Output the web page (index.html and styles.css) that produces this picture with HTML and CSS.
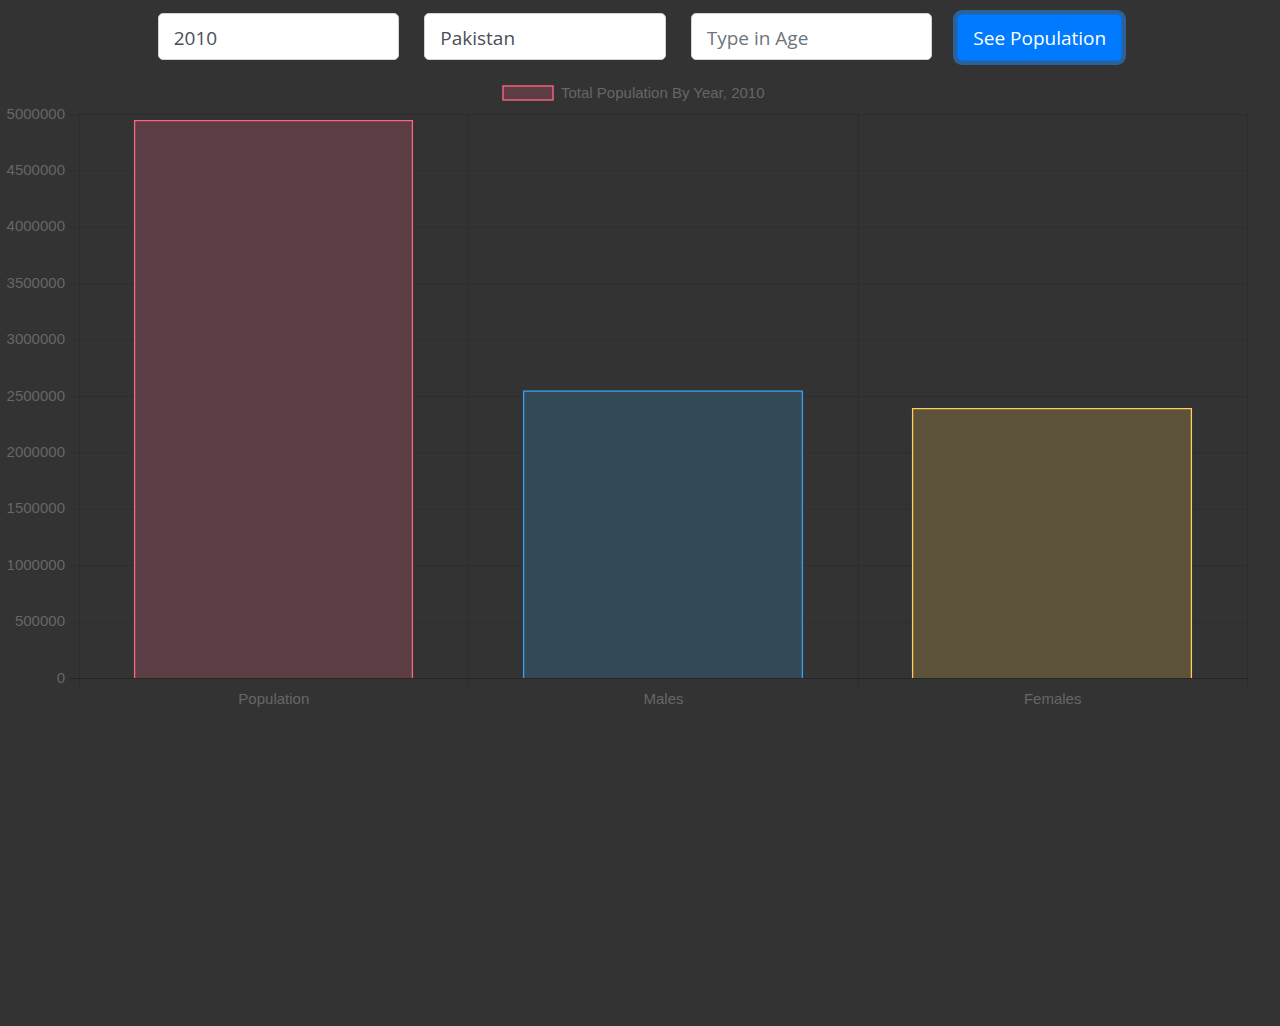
FILE: index.html
```html
<!DOCTYPE html>
<html lang="en">
<head>
<meta charset="utf-8">
<title>Population</title>
<link rel="stylesheet" href="styles.css">
</head>
<body>
<form class="controls">
  <input class="field" type="text" value="2010">
  <input class="field" type="text" value="Pakistan">
  <input class="field" type="text" placeholder="Type in Age">
  <button class="btn" type="button">See Population</button>
</form>
<div class="chart">
  <svg class="chart-svg" width="1280" height="650" viewBox="0 72 1280 650" xmlns="http://www.w3.org/2000/svg">
    <!-- legend -->
    <rect x="503" y="86" width="50" height="14" fill="#5c3d43" stroke="#ff6384" stroke-width="1.4"/>
    <text class="lbl" x="561" y="98">Total Population By Year, 2010</text>

    <!-- horizontal grid lines -->
    <g stroke="rgba(0,0,0,0.1)" stroke-width="1">
      <line x1="69" y1="114.5" x2="1248" y2="114.5"/>
      <line x1="69" y1="170.9" x2="1248" y2="170.9"/>
      <line x1="69" y1="227.3" x2="1248" y2="227.3"/>
      <line x1="69" y1="283.7" x2="1248" y2="283.7"/>
      <line x1="69" y1="340.1" x2="1248" y2="340.1"/>
      <line x1="69" y1="396.5" x2="1248" y2="396.5"/>
      <line x1="69" y1="452.9" x2="1248" y2="452.9"/>
      <line x1="69" y1="509.3" x2="1248" y2="509.3"/>
      <line x1="69" y1="565.7" x2="1248" y2="565.7"/>
      <line x1="69" y1="622.1" x2="1248" y2="622.1"/>
    </g>
    <!-- vertical grid lines -->
    <g stroke="rgba(0,0,0,0.1)" stroke-width="1">
      <line x1="79.5" y1="114" x2="79.5" y2="690"/>
      <line x1="468.5" y1="114" x2="468.5" y2="690"/>
      <line x1="858.5" y1="114" x2="858.5" y2="690"/>
      <line x1="1247.5" y1="114" x2="1247.5" y2="690"/>
    </g>

    <!-- bars -->
    <rect x="134" y="120" width="279" height="558" fill="#5c3d43"/>
    <path d="M134.6 678 V120.6 H412.4 V678" fill="none" stroke="#ff6384" stroke-width="1.3"/>
    <rect x="523" y="390.5" width="280" height="287.5" fill="#344958"/>
    <path d="M523.6 678 V391.1 H802.4 V678" fill="none" stroke="#36a2eb" stroke-width="1.3"/>
    <rect x="912" y="408" width="280" height="270" fill="#5c523a"/>
    <path d="M912.6 678 V408.6 H1191.4 V678" fill="none" stroke="#ffce56" stroke-width="1.3"/>

    <!-- zero line -->
    <line x1="69" y1="678.5" x2="1248" y2="678.5" stroke="rgba(0,0,0,0.25)" stroke-width="1.2"/>

    <!-- y labels -->
    <g class="lbl" text-anchor="end">
      <text x="65" y="118.5">5000000</text>
      <text x="65" y="174.9">4500000</text>
      <text x="65" y="231.3">4000000</text>
      <text x="65" y="287.7">3500000</text>
      <text x="65" y="344.1">3000000</text>
      <text x="65" y="400.5">2500000</text>
      <text x="65" y="456.9">2000000</text>
      <text x="65" y="513.3">1500000</text>
      <text x="65" y="569.7">1000000</text>
      <text x="65" y="626.1">500000</text>
      <text x="65" y="682.5">0</text>
    </g>

    <!-- x labels -->
    <g class="lbl" text-anchor="middle">
      <text x="273.8" y="704">Population</text>
      <text x="663.5" y="704">Males</text>
      <text x="1052.7" y="704">Females</text>
    </g>
  </svg>
</div>
</body>
</html>
```

FILE: styles.css
```css
html, body {
  margin: 0;
  padding: 0;
  background: #333333;
}

body {
  font-family: "Open Sans", "Noto Sans", "Liberation Sans", sans-serif;
  min-height: 1026px;
}

.controls {
  display: flex;
  justify-content: center;
  align-items: center;
  gap: 25px;
  padding: 13px 0 0 0;
  height: 47px;
  margin: 0 0 12px 0;
}

.field {
  box-sizing: border-box;
  width: 241.5px;
  height: 47px;
  margin: 0;
  padding: 8px 15px 6px 15px;
  font-family: inherit;
  font-size: 19px;
  line-height: 1.5;
  color: #495057;
  background: #ffffff;
  border: 1px solid #ced4da;
  border-radius: 5px;
  outline: none;
}

.field::placeholder {
  color: #6c757d;
  opacity: 1;
}

.btn {
  box-sizing: border-box;
  width: 165px;
  height: 47px;
  margin: 1px 0 0 0;
  padding: 8px 10px 6px 10px;
  font-family: inherit;
  font-size: 19px;
  line-height: 1.5;
  color: #ffffff;
  background: #007bff;
  border: 1px solid #0a6fe0;
  border-radius: 5px;
  box-shadow: 0 0 0 4px rgba(38, 143, 255, 0.5);
  cursor: pointer;
  white-space: nowrap;
}

.chart {
  width: 1280px;
}

.chart-svg {
  display: block;
}

.lbl {
  font-family: "Liberation Sans", Arial, sans-serif;
  font-size: 15px;
  fill: #666666;
}
```
